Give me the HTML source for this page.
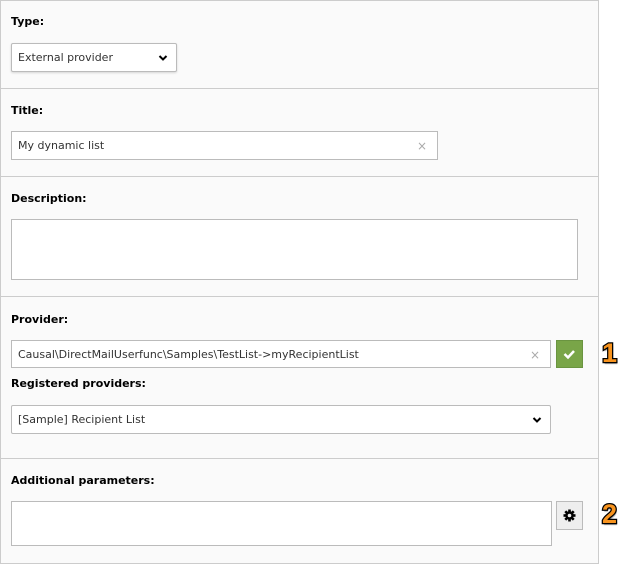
<!DOCTYPE html>
<html><head><style>
body{margin:0;width:629px;height:564px;background:#fff;font-family:"DejaVu Sans","Liberation Sans",sans-serif;position:relative;overflow:hidden}
.panel{position:absolute;left:0;top:0;width:597px;height:562px;background:#fafafa;border:1px solid #ccc}
.sep{position:absolute;left:0;width:598px;height:1px;background:#ccc}
.lbl{position:absolute;left:11px;font-size:11px;font-weight:bold;color:#000}
.box{position:absolute;background:#fff;border:1px solid #bbb;box-sizing:border-box;font-size:11px;color:#333;padding-left:6px;line-height:28px}
.x{position:absolute;right:10px;top:0;color:#aaa;font-size:12px}
.chev{position:absolute;right:8px;top:10px}
.num{position:absolute;font-family:"Liberation Sans",sans-serif;font-weight:bold;font-size:27px;color:#f7931e;-webkit-text-stroke:2.5px #000;paint-order:stroke fill;text-shadow:1px 2px 1px rgba(0,0,0,.4)}
</style></head><body>
<div class="panel"></div>
<div class="sep" style="top:88px"></div>
<div class="sep" style="top:176px"></div>
<div class="sep" style="top:296px"></div>
<div class="sep" style="top:458px"></div>
<div class="lbl" style="top:15px">Type:</div>
<div class="box" style="left:11px;top:43px;width:166px;height:29px;border-radius:2px;box-shadow:0 1px 2px rgba(0,0,0,.15)">External provider<svg class="chev" width="10" height="8" viewBox="0 0 10 8"><path d="M1.5 2 L5 5.5 L8.5 2" stroke="#000" stroke-width="2" fill="none"/></svg></div>
<div class="lbl" style="top:104px">Title:</div>
<div class="box" style="left:11px;top:131px;width:427px;height:29px">My dynamic list<span class="x">×</span></div>
<div class="lbl" style="top:192px">Description:</div>
<div class="box" style="left:11px;top:219px;width:567px;height:61px"></div>
<div class="lbl" style="top:313px">Provider:</div>
<div class="box" style="left:11px;top:340px;width:540px;height:28px">Causal\DirectMailUserfunc\Samples\TestList-&gt;myRecipientList<span class="x">×</span></div>
<div style="position:absolute;left:556px;top:340px;width:27px;height:28px;background:#79a548;border:1px solid #6a9440;box-sizing:border-box"><svg width="25" height="26" viewBox="0 0 25 26"><path d="M7.5 13 L11 16.5 L17 10" stroke="#fff" stroke-width="2.5" fill="none"/></svg></div>
<div class="num" style="left:602px;top:338px">1</div>
<div class="lbl" style="top:377px">Registered providers:</div>
<div class="box" style="left:11px;top:405px;width:540px;height:29px;border-radius:2px">[Sample] Recipient List<svg class="chev" width="10" height="8" viewBox="0 0 10 8"><path d="M1.5 2 L5 5.5 L8.5 2" stroke="#000" stroke-width="2" fill="none"/></svg></div>
<div class="lbl" style="top:474px">Additional parameters:</div>
<div class="box" style="left:11px;top:501px;width:541px;height:45px"></div>
<div style="position:absolute;left:556px;top:501px;width:27px;height:29px;background:#eee;border:1px solid #bbb;box-sizing:border-box">
<svg width="25" height="27" viewBox="0 0 25 27"><g transform="translate(12.5,13.5)" fill="#000"><circle r="4.2"/><g id="t"><rect x="-1.3" y="-6" width="2.6" height="12"/><rect x="-1.3" y="-6" width="2.6" height="12" transform="rotate(45)"/><rect x="-1.3" y="-6" width="2.6" height="12" transform="rotate(90)"/><rect x="-1.3" y="-6" width="2.6" height="12" transform="rotate(135)"/></g><circle r="1.8" fill="#eee"/></g></svg></div>
<div class="num" style="left:602px;top:499px">2</div>
</body></html>
